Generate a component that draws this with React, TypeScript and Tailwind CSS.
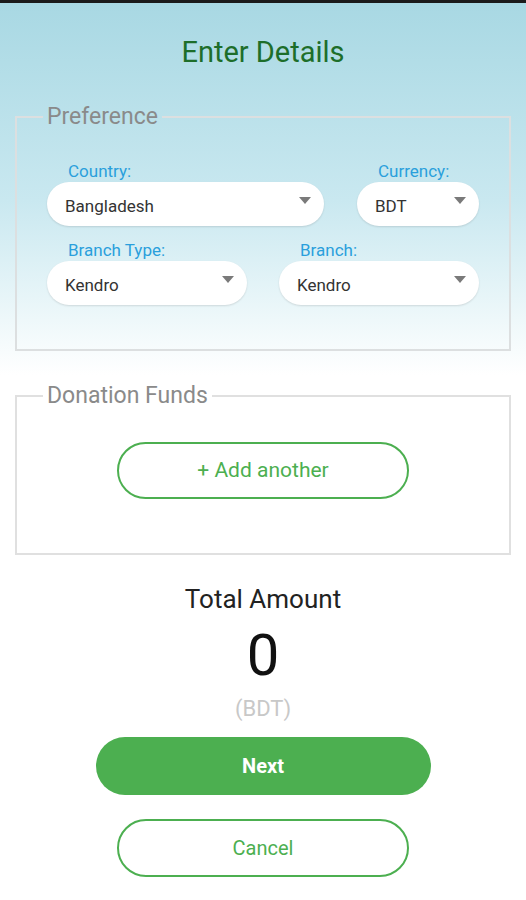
import React from 'react';

const Caret = () => (
  <svg width="12" height="8" viewBox="0 0 12 8" className="mb-[6px] shrink-0">
    <path d="M0 0 L12 0 L6 7 Z" fill="#7a7a7a" />
  </svg>
);

interface SelectProps {
  label: string;
  value: string;
  className?: string;
}

const FakeSelect = ({ label, value, className = "" }: SelectProps) => (
  <div className={`flex flex-col ${className}`}>
    <span className="pl-[21px] text-[17px] leading-[20px] text-[#2a9fdc]">{label}</span>
    <div className="mt-[1px] h-[44px] rounded-full bg-white shadow-[0_1px_2px_rgba(0,0,0,0.12)] flex items-center justify-between pl-[18px] pr-[13px]">
      <span className="pt-[6px] text-[17px] text-[#333]">{value}</span>
      <Caret />
    </div>
  </div>
);

export default function App() {
  return (
    <div
      className="min-h-[900px] w-[526px] bg-[linear-gradient(180deg,#a8d8e3_0px,#c9e8f0_200px,#eef8fa_320px,#ffffff_375px)]"
      style={{ fontFamily: 'Roboto, "Noto Sans", sans-serif' }}
    >
      <div className="h-[3px] bg-[#1b1b1b]" />

      <h1 className="mt-[34px] text-center text-[29px] leading-[30px] text-[#1d6e2a]">Enter Details</h1>

      <div className="px-[15px]">
        {/* Preference */}
        <fieldset className="mt-[37px] border-2 border-[#dcdfe0] px-[30px] pb-[44px]">
          <legend className="ml-[-4px] px-[4px] text-[23px] leading-[26px] text-[#8a8a8a]">Preference</legend>
          <div className="mt-[31px] flex justify-between">
            <FakeSelect label="Country:" value="Bangladesh" className="w-[277px]" />
            <FakeSelect label="Currency:" value="BDT" className="w-[122px]" />
          </div>
          <div className="mt-[14px] grid grid-cols-2 gap-[32px]">
            <FakeSelect label="Branch Type:" value="Kendro" />
            <FakeSelect label="Branch:" value="Kendro" />
          </div>
        </fieldset>

        {/* Donation Funds */}
        <fieldset className="mt-[32px] border-2 border-[#e0e0e0] pb-[54px]">
          <legend className="ml-[26px] px-[4px] text-[23px] leading-[26px] text-[#8a8a8a]">Donation Funds</legend>
          <div className="mt-[33px] flex justify-center">
            <button className="h-[57px] w-[292px] rounded-full border-2 border-[#4caf50] bg-white text-[21px] text-[#4caf50]">
              + Add another
            </button>
          </div>
        </fieldset>
      </div>

      <div className="flex flex-col items-center">
        <div className="mt-[29px] text-[26px] leading-[30px] text-[#222]">Total Amount</div>
        <div className="mt-[10px] text-[58px] leading-[62px] text-[#111]">0</div>
        <div className="mt-[10px] text-[22px] leading-[26px] text-[#c8c8c8]">(BDT)</div>
        <button className="mt-[15px] h-[58px] w-[335px] rounded-full bg-[#4caf50] text-[20px] font-bold text-white">
          Next
        </button>
        <button className="mt-[24px] h-[58px] w-[292px] rounded-full border-2 border-[#4caf50] bg-white text-[20px] text-[#4caf50]">
          Cancel
        </button>
      </div>
    </div>
  );
}
